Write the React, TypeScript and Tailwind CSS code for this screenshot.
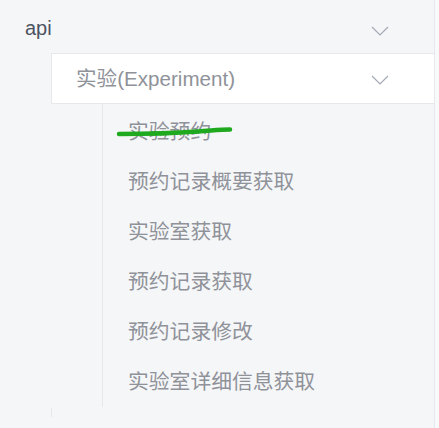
import { ChevronDown } from 'lucide-react';

const items = [
    '实验预约',
    '预约记录概要获取',
    '实验室获取',
    '预约记录获取',
    '预约记录修改',
    '实验室详细信息获取',
];

const font = {
    fontFamily: '"Liberation Sans", "Noto Sans CJK SC", sans-serif',
};

function Chevron() {
    return (
        <svg width="18" height="10" viewBox="0 0 18 10" className="shrink-0">
            <path
                d="M1 1 L9 9 L17 1"
                fill="none"
                stroke="#a3a9b3"
                strokeWidth="1.2"
            />
        </svg>
    );
}

function App() {
    return (
        <div
            className="w-[439px] h-[428px] flex bg-[#f5f6f8] overflow-hidden"
            style={font}
        >
            {/* Menu panel */}
            <div className="w-[435px] border-r border-[#e6e8ec] flex flex-col">
                {/* Top level: api */}
                <div className="h-[53px] flex items-start justify-between pl-[25px] pr-[45px] pt-[17px]">
                    <span className="text-[20px] leading-[23px] text-[#4b5361]">
                        api
                    </span>
                    <span className="mt-[9px]">
                        <Chevron />
                    </span>
                </div>

                {/* Sub group */}
                <div className="ml-[51px] flex flex-col">
                    <div className="h-[51px] bg-white border-y border-l border-[#e6e8ec] flex items-center justify-between pl-[24px] pr-[45px]">
                        <span className="text-[20.6px] leading-[24px] text-[#8f9299]">
                            实验(Experiment)
                        </span>
                        <span className="mt-[2px]">
                            <Chevron />
                        </span>
                    </div>

                    <div className="ml-[51px] border-l border-[#e6e8ec] pt-[3px]">
                        {items.map((item, i) => (
                            <div
                                key={item}
                                className="relative h-[50px] flex items-center pl-[25px]"
                            >
                                <span className="text-[20.8px] leading-[24px] text-[#8f9299]">
                                    {item}
                                </span>
                                {i === 0 && (
                                    <svg
                                        className="absolute left-0 top-0"
                                        width="140"
                                        height="50"
                                        viewBox="0 0 140 50"
                                    >
                                        <path
                                            d="M16 27 C 45 27, 75 26, 95 24.5 S 118 22.5, 127 22.5"
                                            fill="none"
                                            stroke="#1ea91e"
                                            strokeWidth="4.5"
                                            strokeLinecap="round"
                                        />
                                    </svg>
                                )}
                            </div>
                        ))}
                    </div>

                    <div className="h-[9px] mt-[1px] border-l border-[#e6e8ec]" />
                </div>
            </div>
            <div className="flex-1 bg-[#f8f9fa]" />
        </div>
    );
}

export default App;
